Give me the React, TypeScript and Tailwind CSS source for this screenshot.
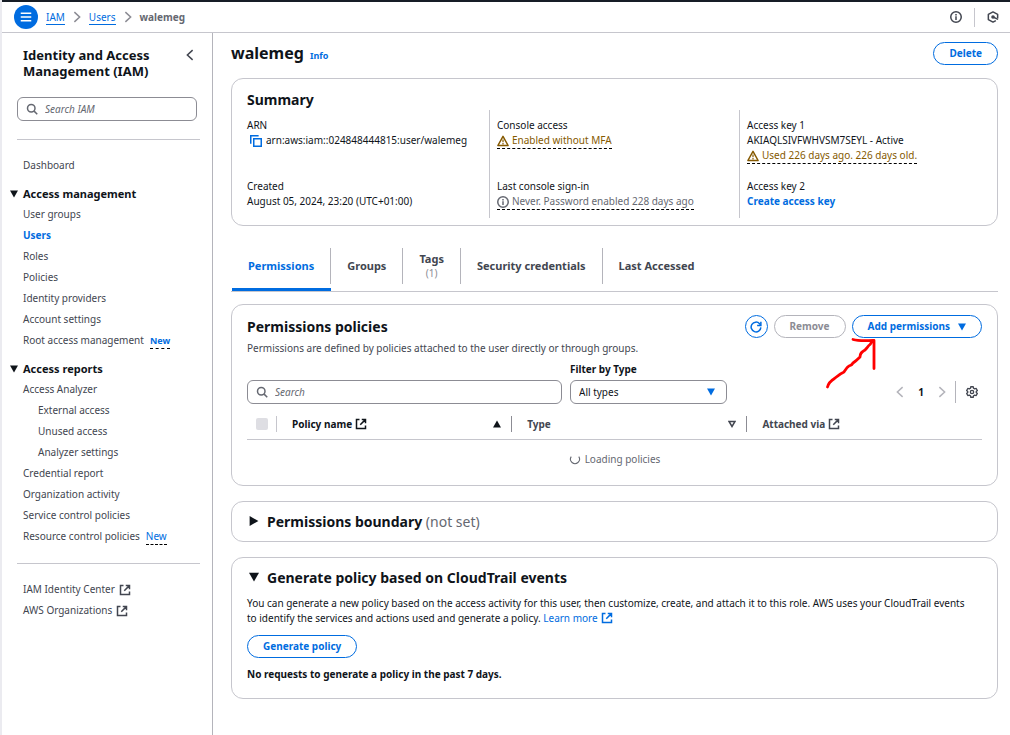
import type { ReactNode } from "react";

type IconProps = { className?: string };

function Svg({ className = "", children }: IconProps & { children: ReactNode }) {
  return (
    <svg
      viewBox="0 0 16 16"
      aria-hidden="true"
      className={`size-3 shrink-0 fill-none stroke-current ${className}`}
      strokeWidth="2"
    >
      {children}
    </svg>
  );
}

const ExternalIcon = ({ className = "" }: IconProps) => (
  <Svg className={className}>
    <path d="M6 2H2v12h12v-4M9 2h5v5M7 9l6.5-6.5" />
  </Svg>
);

const SearchIcon = ({ className = "" }: IconProps) => (
  <Svg className={className}>
    <circle cx="7" cy="7" r="5" />
    <path d="M10.8 10.8 15 15" />
  </Svg>
);

const InfoIcon = ({ className = "" }: IconProps) => (
  <Svg className={className}>
    <circle cx="8" cy="8" r="7" />
    <path d="M8 7v5M8 4v2" />
  </Svg>
);

const WarningIcon = ({ className = "" }: IconProps) => (
  <Svg className={className}>
    <path d="M8 1.8 14.8 14H1.200L8 1.800Z" strokeLinejoin="round" />
    <path d="M8 6v3.500M8 10.800v1.700" strokeWidth="1.600" />
  </Svg>
);

const CopyIcon = ({ className = "" }: IconProps) => (
  <Svg className={className}>
    <path d="M1 11.5V1h10.5" />
    <path d="M5 5h10v10H5Z" />
  </Svg>
);

const RefreshIcon = ({ className = "" }: IconProps) => (
  <Svg className={className}>
    <path d="M14.5 8.5A6.5 6.5 0 1 1 12.8 3.6L14 5" />
    <path d="M14.5 1v5H9.5" />
  </Svg>
);

const GearIcon = ({ className = "" }: IconProps) => (
  <Svg className={className}>
    <path
      d="M6.4 1h3.2l.5 2 1.5.9 2-.6 1.5 2.7L13.7 7.4v1.2l1.4 1.4-1.5 2.7-2-.6-1.5.9-.5 2H6.4l-.5-2-1.5-.9-2 .6L.9 10l1.4-1.4V7.4L.9 6l1.5-2.7 2 .6L5.9 3Z"
      strokeWidth="1.8"
      strokeLinejoin="round"
    />
    <circle cx="8" cy="8" r="2.2" strokeWidth="1.8" />
  </Svg>
);

const HexagonIcon = ({ className = "" }: IconProps) => (
  <Svg className={className}>
    <path d="M14.200 9.500V4.600L8 1.200 1.800 4.600v6.800l6.200 3.400 3.800-2" strokeLinejoin="round" />
    <circle cx="8" cy="8" r="2.400" className="fill-current stroke-none" />
    <path d="m8 8 6.800 3.200" />
  </Svg>
);

const ChevronIcon = ({ className = "" }: IconProps) => (
  <Svg className={className}>
    <path d="m4.5 1.5 7 6.5-7 6.5" />
  </Svg>
);

const Triangle = ({ className = "size-2" }: IconProps) => (
  <svg viewBox="0 0 8 8" aria-hidden="true" className={`shrink-0 fill-current ${className}`}>
    <path d="M0 .5h8L4 7.5Z" />
  </svg>
);

const HollowTriangle = () => (
  <svg viewBox="0 0 8 8" aria-hidden="true" className="size-2 shrink-0 fill-none stroke-current">
    <path d="M1 1.5h6L4 6.5Z" strokeWidth="1.5" />
  </svg>
);

function NavLink({
  label,
  active = false,
  nested = false,
  badge,
  external = false,
}: {
  label: string;
  active?: boolean;
  nested?: boolean;
  badge?: ReactNode;
  external?: boolean;
}) {
  return (
    <li className={`flex h-[21px] items-center ${nested ? "pl-[15px]" : ""}`}>
      <a href="#" className={`flex items-center gap-1 ${active ? "font-bold text-[#006ce0]" : "text-[#424650]"}`}>
        {label}
        {external && <ExternalIcon />}
      </a>
      {badge}
    </li>
  );
}

function NavSection({ title, children }: { title: string; children: ReactNode }) {
  return (
    <section className="mt-[7px]">
      <h3 className="-ml-[13px]">
        <button type="button" className="flex h-[21px] items-center gap-[5px] text-[11px] font-bold text-[#0f141a]">
          <Triangle />
          {title}
        </button>
      </h3>
      <ul>{children}</ul>
    </section>
  );
}

function Sidebar() {
  return (
    <nav className="w-[211px] shrink-0 border-r border-[#b4b4bb] pt-3.5 pr-3 pl-[15px]" aria-label="IAM">
      <div className="flex items-start justify-between pl-1.5">
        <h2 className="w-36 text-[13px] leading-4 font-bold text-[#0f141a]">Identity and Access Management (IAM)</h2>
        <button type="button" aria-label="Close navigation" className="mt-0.5 mr-1 text-[#424650]">
          <ChevronIcon className="rotate-180" />
        </button>
      </div>
      <label className="mt-[18px] mr-[3px] flex h-6 items-center gap-[7px] rounded-md border border-[#8c8c94] px-2 text-[#656871]">
        <SearchIcon />
        <input
          type="search"
          aria-label="Search IAM"
          placeholder="Search IAM"
          className="min-w-0 flex-1 outline-none placeholder:text-[#656871] placeholder:italic"
        />
      </label>
      <hr className="mt-[18px] border-[#c6c6cd]" />
      <div className="mt-[15px] pl-1.5">
        <ul>
          <NavLink label="Dashboard" />
        </ul>
        <NavSection title="Access management">
          <NavLink label="User groups" />
          <NavLink label="Users" active />
          <NavLink label="Roles" />
          <NavLink label="Policies" />
          <NavLink label="Identity providers" />
          <NavLink label="Account settings" />
          <NavLink
            label="Root access management"
            badge={
              <button type="button" className="ml-1.5 border-b border-dashed border-black text-[9px] font-bold text-[#006ce0]">
                New
              </button>
            }
          />
        </NavSection>
        <NavSection title="Access reports">
          <NavLink label="Access Analyzer" />
          <NavLink label="External access" nested />
          <NavLink label="Unused access" nested />
          <NavLink label="Analyzer settings" nested />
          <NavLink label="Credential report" />
          <NavLink label="Organization activity" />
          <NavLink label="Service control policies" />
          <NavLink
            label="Resource control policies"
            badge={
              <button type="button" className="ml-1.5 border-b border-dashed border-black text-[#006ce0]">
                New
              </button>
            }
          />
        </NavSection>
      </div>
      <hr className="mt-4 border-[#c6c6cd]" />
      <ul className="mt-[15px] pl-1.5">
        <NavLink label="IAM Identity Center" external />
        <NavLink label="AWS Organizations" external />
      </ul>
    </nav>
  );
}

function TopBar() {
  return (
    <header className="flex h-[33px] items-center justify-between border-t-2 border-b border-t-[#161d26] border-b-[#c6c6cd] pr-[11px] pl-3">
      <div className="flex items-center gap-2">
        <button
          type="button"
          aria-label="Open navigation"
          className="flex size-6 items-center justify-center rounded-full bg-[#006ce0] text-white"
        >
          <Svg>
            <path d="M1 3h14M1 8h14M1 13h14" />
          </Svg>
        </button>
        <nav aria-label="Breadcrumbs">
          <ol className="flex items-center gap-1.5">
            <li>
              <a href="#" className="border-b border-[#006ce0] text-[#006ce0]">IAM</a>
            </li>
            <ChevronIcon className="text-[#8c8c94]" />
            <li>
              <a href="#" className="border-b border-[#006ce0] text-[#006ce0]">Users</a>
            </li>
            <ChevronIcon className="text-[#8c8c94]" />
            <li className="font-bold text-[#656871]">walemeg</li>
          </ol>
        </nav>
      </div>
      <div className="flex items-center gap-3 text-[#424650]">
        <button type="button" aria-label="Info">
          <InfoIcon />
        </button>
        <span className="h-[19px] w-px bg-[#c6c6cd]" />
        <button type="button" aria-label="Tutorials">
          <HexagonIcon />
        </button>
      </div>
    </header>
  );
}

function Button({ children, disabled = false }: { children: ReactNode; disabled?: boolean }) {
  return (
    <button
      type="button"
      disabled={disabled}
      className={`flex h-[23px] items-center gap-2 rounded-full border px-[15px] font-bold ${
        disabled ? "border-[#b4b4bb] text-[#8c8c94]" : "border-[#006ce0] text-[#006ce0]"
      }`}
    >
      {children}
    </button>
  );
}

function Card({ children, className = "" }: { children: ReactNode; className?: string }) {
  return <section className={`rounded-xl border border-[#c6c6cd] px-[15px] ${className}`}>{children}</section>;
}

function Field({ label, children, className = "" }: { label: string; children: ReactNode; className?: string }) {
  return (
    <div className={className}>
      <dt>{label}</dt>
      <dd>{children}</dd>
    </div>
  );
}

function Status({ icon, children, className }: { icon: ReactNode; children: ReactNode; className: string }) {
  return (
    <button type="button" className={`flex h-4 items-center gap-[3px] border-b border-dashed border-b-black ${className}`}>
      {icon}
      {children}
    </button>
  );
}

function Summary() {
  return (
    <Card className="mt-[13px] pb-[7px]">
      <h2 className="mt-[11px] mb-px text-[14px] leading-[19px] font-bold">Summary</h2>
      <dl className="grid grid-cols-3 gap-[15px]">
        <div className="py-2">
          <Field label="ARN" className="h-[61px]">
            <span className="flex items-center gap-1 pl-[3px]">
              <button type="button" aria-label="Copy ARN" className="text-[#006ce0]">
                <CopyIcon />
              </button>
              arn:aws:iam::024848444815:user/walemeg
            </span>
          </Field>
          <Field label="Created">August 05, 2024, 23:20 (UTC+01:00)</Field>
        </div>
        <div className="-ml-2 border-l border-[#c6c6cd] py-2 pl-[7px]">
          <Field label="Console access" className="h-[61px]">
            <Status icon={<WarningIcon />} className="text-[#855900]">Enabled without MFA</Status>
          </Field>
          <Field label="Last console sign-in">
            <Status icon={<InfoIcon />} className="text-[#656871]">Never. Password enabled 228 days ago</Status>
          </Field>
        </div>
        <div className="-ml-2 border-l border-[#c6c6cd] py-2 pl-[7px]">
          <Field label="Access key 1" className="h-[61px]">
            AKIAQLSIVFWHVSM7SEYL - Active
            <Status icon={<WarningIcon />} className="text-[#855900]">Used 226 days ago. 226 days old.</Status>
          </Field>
          <Field label="Access key 2">
            <a href="#" className="font-bold text-[#006ce0]">Create access key</a>
          </Field>
        </div>
      </dl>
    </Card>
  );
}

function Tab({ children, active = false, last = false }: { children: ReactNode; active?: boolean; last?: boolean }) {
  return (
    <div className={`flex border-b-3 pb-1 ${active ? "border-[#006ce0]" : "border-transparent"}`}>
      <button
        type="button"
        role="tab"
        aria-selected={active}
        className={`h-9 px-4 text-[11px] leading-[14px] font-bold ${active ? "text-[#006ce0]" : "text-[#424650]"} ${
          last ? "" : "border-r border-[#b4b4bb]"
        }`}
      >
        {children}
      </button>
    </div>
  );
}

function Tabs() {
  return (
    <div role="tablist" className="mt-[22px] flex border-b border-[#c6c6cd] pl-px">
      <Tab active>Permissions</Tab>
      <Tab>Groups</Tab>
      <Tab>
        Tags
        <span className="block text-[10px] font-normal text-[#8c8c94]">(1)</span>
      </Tab>
      <Tab>Security credentials</Tab>
      <Tab last>Last Accessed</Tab>
    </div>
  );
}

function PointerArrow() {
  return (
    <svg
      viewBox="0 0 52 54"
      aria-hidden="true"
      className="pointer-events-none absolute top-5 -left-[27px] h-[54px] w-[52px] fill-none stroke-[#ff0000]"
      strokeWidth="2.8"
      strokeLinecap="round"
      strokeLinejoin="round"
    >
      <path d="M2.5 52c1-4 3-6 7-8.500 3-2.500 5-4.500 9.500-6.500 2-3 3-5 5-6 2-.5 3-1 4-3 3-2 5-4 7-6 0-4 2-5 5-7 2-2 3-4 5-5.500 1-1 1.500-2 2.500-3.500" />
      <path d="M28 4.500c7 2 14 1 21 1v28" />
    </svg>
  );
}

const headDivider = "border-r border-[#8c8c94]";

function PoliciesTable() {
  return (
    <table className="mt-3 w-full table-fixed border-collapse">
      <thead>
        <tr className="border-b border-[#c6c6cd] text-left text-[#424650]">
          <th className="w-[30px] pb-[7px]">
            <div className="flex h-4 items-center border-r border-[#c6c6cd] pl-[9px]">
              <input
                type="checkbox"
                disabled
                aria-label="Select all policies"
                className="size-3 appearance-none rounded-xs bg-[#dedee3]"
              />
            </div>
          </th>
          <th className="w-[32%] pb-[7px]">
            <div className={`flex h-4 items-center justify-between pr-2.5 pl-[15px] ${headDivider}`}>
              <a href="#" className="flex items-center gap-[3px] text-[#0f141a]">
                Policy name
                <ExternalIcon />
              </a>
              <Triangle className="size-2 rotate-180 text-[#0f141a]" />
            </div>
          </th>
          <th className="w-[32%] pb-[7px]">
            <div className={`flex h-4 items-center justify-between pr-2.5 pl-[15px] ${headDivider}`}>
              Type
              <HollowTriangle />
            </div>
          </th>
          <th className="pb-[7px]">
            <div className="flex h-4 items-center gap-[3px] pl-[15px]">
              Attached via
              <ExternalIcon />
            </div>
          </th>
        </tr>
      </thead>
      <tbody>
        <tr>
          <td colSpan={4} className="h-10 text-[#656871]">
            <div className="flex items-center justify-center gap-1">
              <Svg>
                <path d="M3 3.500a6 6 0 1 0 10 0" strokeWidth="1.400" />
              </Svg>
              Loading policies
            </div>
          </td>
        </tr>
      </tbody>
    </table>
  );
}

function PermissionsPolicies() {
  return (
    <Card className="mt-3 pt-2.5 pb-[5px]">
      <div className="flex items-center justify-between">
        <h2 className="text-[14px] leading-[19px] font-bold">Permissions policies</h2>
        <div className="flex items-center gap-1.5">
          <button
            type="button"
            aria-label="Refresh"
            className="flex size-[23px] items-center justify-center rounded-full border border-[#006ce0] text-[#006ce0]"
          >
            <RefreshIcon />
          </button>
          <Button disabled>Remove</Button>
          <div className="relative">
            <Button>
              Add permissions
              <Triangle />
            </Button>
            <PointerArrow />
          </div>
        </div>
      </div>
      <p className="mt-[3px] text-[#424650]">
        Permissions are defined by policies attached to the user directly or through groups.
      </p>
      <div className="mt-1.5 flex items-end gap-2">
        <label className="flex h-6 w-[315px] items-center gap-[7px] rounded-md border border-[#8c8c94] px-2 text-[#656871]">
          <SearchIcon />
          <input
            type="search"
            aria-label="Search policies"
            placeholder="Search"
            className="min-w-0 flex-1 outline-none placeholder:text-[#656871] placeholder:italic"
          />
        </label>
        <div className="w-[157px]">
          <label htmlFor="type-filter" className="mb-[3px] block font-bold">
            Filter by Type
          </label>
          <div className="relative flex items-center">
            <select
              id="type-filter"
              className="h-6 w-full appearance-none rounded-md border border-[#8c8c94] bg-white px-2"
            >
              <option>All types</option>
            </select>
            <Triangle className="pointer-events-none absolute right-3 size-2 text-[#006ce0]" />
          </div>
        </div>
        <div className="ml-auto flex h-6 items-center text-[#b4b4bb]">
          <button type="button" aria-label="Previous page" disabled>
            <ChevronIcon className="rotate-180" />
          </button>
          <button type="button" className="w-[30px] font-bold text-[#0f141a]">1</button>
          <button type="button" aria-label="Next page" disabled>
            <ChevronIcon />
          </button>
          <span className="mr-2.5 ml-[7px] h-[22px] w-px bg-[#b4b4bb]" />
          <button type="button" aria-label="Preferences" className="pr-1 text-[#424650]">
            <GearIcon />
          </button>
        </div>
      </div>
      <PoliciesTable />
    </Card>
  );
}

export default function App() {
  return (
    <div className="flex min-h-screen flex-col border-l-2 border-[#ebebf0] bg-white font-['Noto_Sans','Open_Sans',sans-serif] text-[10px] leading-[15px] text-[#0f141a]">
      <TopBar />
      <div className="flex flex-1">
        <Sidebar />
        <main className="min-w-0 flex-1 pr-3 pb-9 pl-[18px]">
          <div className="mt-[9px] flex items-center justify-between">
            <div className="flex items-baseline gap-1.5">
              <h1 className="text-[16px] leading-[23px] font-bold">walemeg</h1>
              <a href="#" className="text-[9px] font-bold text-[#006ce0]">Info</a>
            </div>
            <Button>Delete</Button>
          </div>
          <Summary />
          <Tabs />
          <PermissionsPolicies />
          <Card className="mt-[15px] py-2.5">
            <h2>
              <button type="button" className="flex items-center gap-2 pl-0.5 text-[14px] leading-[19px] font-bold">
                <Triangle className="size-2.5 -rotate-90" />
                <span>
                  Permissions boundary <span className="font-normal text-[#656871]">(not set)</span>
                </span>
              </button>
            </h2>
          </Card>
          <Card className="mt-[15px] pt-2.5 pb-4">
            <h2>
              <button type="button" className="flex items-center gap-2 pl-0.5 text-[14px] leading-[19px] font-bold">
                <Triangle className="size-2.5" />
                Generate policy based on CloudTrail events
              </button>
            </h2>
            <p className="mt-[9px] mb-[9px] pr-2">
              You can generate a new policy based on the access activity for this user, then customize, create, and attach
              it to this role. AWS uses your CloudTrail events to identify the services and actions used and generate a
              policy.{" "}
              <a href="#" className="inline-flex items-center gap-[3px] text-[#006ce0]">
                Learn more
                <ExternalIcon />
              </a>
            </p>
            <Button>Generate policy</Button>
            <p className="mt-[9px] font-bold">No requests to generate a policy in the past 7 days.</p>
          </Card>
        </main>
      </div>
    </div>
  );
}
